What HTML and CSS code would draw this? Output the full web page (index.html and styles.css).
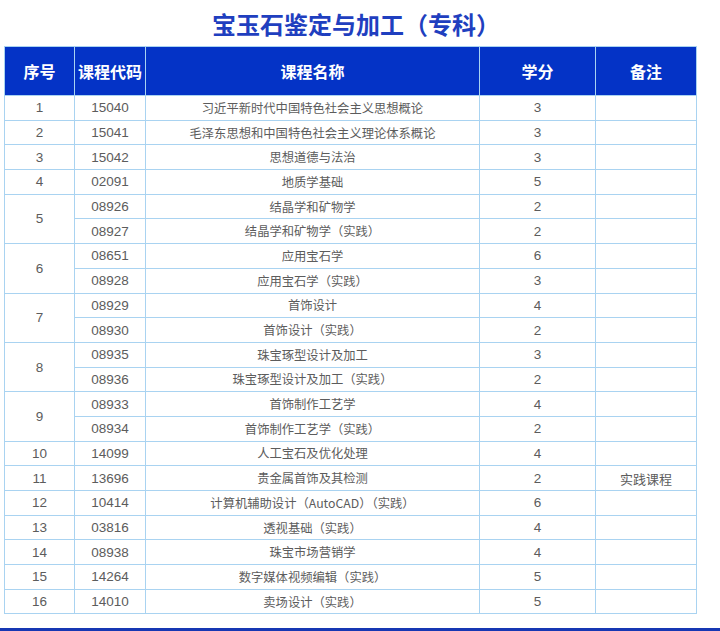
FILE: index.html
```html
<!DOCTYPE html>
<html lang="zh">
<head>
<meta charset="utf-8">
<title>宝玉石鉴定与加工（专科）</title>
<link rel="stylesheet" href="styles.css">
</head>
<body>
<div class="page">
  <h1 class="title">宝玉石鉴定与加工（专科）</h1>
  <table class="plan">
    <colgroup>
      <col class="c1"><col class="c2"><col class="c3"><col class="c4"><col class="c5">
    </colgroup>
    <thead>
      <tr><th>序号</th><th>课程代码</th><th>课程名称</th><th>学分</th><th>备注</th></tr>
    </thead>
    <tbody>
      <tr><td class="num">1</td><td class="num">15040</td><td class="name">习近平新时代中国特色社会主义思想概论</td><td class="num">3</td><td class="note"></td></tr>
      <tr><td class="num">2</td><td class="num">15041</td><td class="name">毛泽东思想和中国特色社会主义理论体系概论</td><td class="num">3</td><td class="note"></td></tr>
      <tr><td class="num">3</td><td class="num">15042</td><td class="name">思想道德与法治</td><td class="num">3</td><td class="note"></td></tr>
      <tr><td class="num">4</td><td class="num">02091</td><td class="name">地质学基础</td><td class="num">5</td><td class="note"></td></tr>
      <tr><td class="num" rowspan="2">5</td><td class="num">08926</td><td class="name">结晶学和矿物学</td><td class="num">2</td><td class="note"></td></tr>
      <tr><td class="num">08927</td><td class="name">结晶学和矿物学（实践）</td><td class="num">2</td><td class="note"></td></tr>
      <tr><td class="num" rowspan="2">6</td><td class="num">08651</td><td class="name">应用宝石学</td><td class="num">6</td><td class="note"></td></tr>
      <tr><td class="num">08928</td><td class="name">应用宝石学（实践）</td><td class="num">3</td><td class="note"></td></tr>
      <tr><td class="num" rowspan="2">7</td><td class="num">08929</td><td class="name">首饰设计</td><td class="num">4</td><td class="note"></td></tr>
      <tr><td class="num">08930</td><td class="name">首饰设计（实践）</td><td class="num">2</td><td class="note"></td></tr>
      <tr><td class="num" rowspan="2">8</td><td class="num">08935</td><td class="name">珠宝琢型设计及加工</td><td class="num">3</td><td class="note"></td></tr>
      <tr><td class="num">08936</td><td class="name">珠宝琢型设计及加工（实践）</td><td class="num">2</td><td class="note"></td></tr>
      <tr><td class="num" rowspan="2">9</td><td class="num">08933</td><td class="name">首饰制作工艺学</td><td class="num">4</td><td class="note"></td></tr>
      <tr><td class="num">08934</td><td class="name">首饰制作工艺学（实践）</td><td class="num">2</td><td class="note"></td></tr>
      <tr><td class="num">10</td><td class="num">14099</td><td class="name">人工宝石及优化处理</td><td class="num">4</td><td class="note"></td></tr>
      <tr><td class="num">11</td><td class="num">13696</td><td class="name">贵金属首饰及其检测</td><td class="num">2</td><td class="note">实践课程</td></tr>
      <tr><td class="num">12</td><td class="num">10414</td><td class="name">计算机辅助设计（AutoCAD）（实践）</td><td class="num">6</td><td class="note"></td></tr>
      <tr><td class="num">13</td><td class="num">03816</td><td class="name">透视基础（实践）</td><td class="num">4</td><td class="note"></td></tr>
      <tr><td class="num">14</td><td class="num">08938</td><td class="name">珠宝市场营销学</td><td class="num">4</td><td class="note"></td></tr>
      <tr><td class="num">15</td><td class="num">14264</td><td class="name">数字媒体视频编辑（实践）</td><td class="num">5</td><td class="note"></td></tr>
      <tr><td class="num">16</td><td class="num">14010</td><td class="name">卖场设计（实践）</td><td class="num">5</td><td class="note"></td></tr>
    </tbody>
  </table>
  <div class="bottom-bar"></div>
</div>
</body>
</html>
```

FILE: styles.css
```css
html, body {
  margin: 0;
  padding: 0;
  background: #ffffff;
}

.page {
  width: 720px;
  height: 631px;
  overflow: hidden;
  font-family: "Liberation Sans", "Noto Sans CJK SC", sans-serif;
}

.title {
  margin: 0 0 0 4px;
  padding: 2px 0 0 12px;
  box-sizing: border-box;
  width: 692px;
  height: 46px;
  line-height: 44px;
  text-align: center;
  font-size: 24px;
  font-weight: bold;
  color: #1f3fbf;
  font-family: "Noto Sans CJK SC", sans-serif;
}

.plan {
  margin-left: 4px;
  width: 692px;
  border-collapse: collapse;
  table-layout: fixed;
}

.c1 { width: 70px; }
.c2 { width: 71px; }
.c3 { width: 334px; }
.c4 { width: 116px; }
.c5 { width: 101px; }

.plan th,
.plan td {
  border: 1px solid #a9d3f1;
  text-align: center;
  padding: 0;
  white-space: nowrap;
}

.plan th {
  height: 48px;
  background: #0433c6;
  color: #ffffff;
  font-size: 16px;
  font-weight: bold;
  font-family: "Noto Sans CJK SC", sans-serif;
}

.plan td {
  height: 23.7px;
  color: #5c5c5c;
}

.num {
  font-size: 13.5px;
  font-family: "Liberation Sans", "Noto Sans CJK SC", sans-serif;
}

.name {
  font-size: 12.3px;
  font-family: "Noto Sans CJK SC", sans-serif;
}

.note {
  font-size: 13px;
  font-family: "Noto Sans CJK SC", sans-serif;
}

.bottom-bar {
  margin-top: 14px;
  height: 6px;
  background: #1737b3;
}
```
